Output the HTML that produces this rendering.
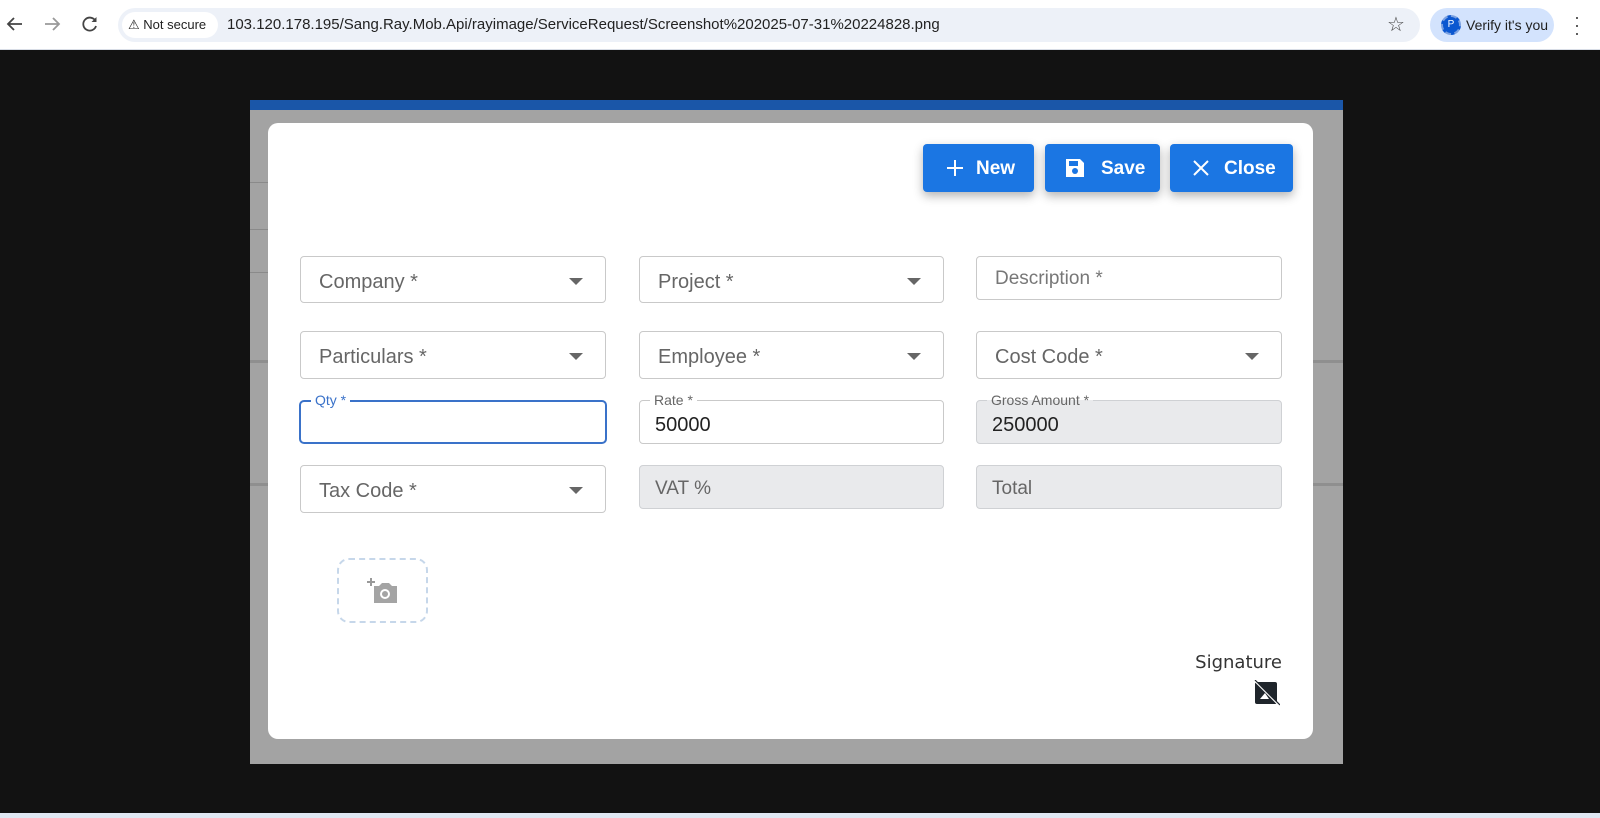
<!DOCTYPE html>
<html><head><meta charset="utf-8"><style>
*{box-sizing:border-box;margin:0;padding:0}
body{width:1600px;height:818px;overflow:hidden;background:#121212;font-family:"Liberation Sans",sans-serif;position:relative}
.abs{position:absolute}
.bar{left:0;top:0;width:1600px;height:50px;background:#fff;border-bottom:1px solid #d8dde6}
.url{left:118px;top:8px;width:1302px;height:34px;border-radius:17px;background:#edf1f8}
.ns{left:122px;top:12px;height:26px;width:96px;border-radius:13px;background:#fff;font-size:13px;line-height:26px;padding-left:6px;color:#222}
.urltext{left:227px;top:16px;font-size:15px;color:#222}
.verify{left:1430px;top:8px;width:124px;height:34px;border-radius:17px;background:#d3e3fd;font-size:14px;line-height:34px;padding-left:36px;color:#1f1f1f}
.overlay{left:250px;top:100px;width:1093px;height:664px;background:#a3a3a3}
.blue{left:250px;top:100px;width:1093px;height:10px;background:#1a56a8}
.modal{left:268px;top:123px;width:1045px;height:616px;background:#fff;border-radius:10px}
.btn{top:144px;height:48px;background:#1b76e3;border-radius:4px;color:#fff;font-weight:bold;font-size:19px;line-height:50px;box-shadow:0 4px 10px rgba(0,0,0,.3)}
.btn svg{position:absolute;top:13px}
.btn span{position:absolute;top:0}
.f{border:1px solid #c9c9c9;border-radius:4px;background:#fff;font-size:20px;color:#666;padding-left:18px}
.f.dis{background:#e9eaec;border-color:#cfd1d4}
.arrow{position:absolute;right:22px;top:50%;margin-top:-2px;width:0;height:0;border-left:7px solid transparent;border-right:7px solid transparent;border-top:7px solid #666}
.lbl{position:absolute;top:-9px;left:10px;background:#fff;padding:0 4px;font-size:14px;line-height:16px;color:#666}
</style></head><body>
<div class="abs bar"></div>
<svg class="abs" style="left:6px;top:15px" width="18" height="18" viewBox="0 0 18 18"><path d="M16 9H3M8 3L2 9l6 6" stroke="#444" stroke-width="1.8" fill="none"/></svg>
<svg class="abs" style="left:43px;top:15px" width="18" height="18" viewBox="0 0 18 18"><path d="M2 9h13M10 3l6 6-6 6" stroke="#999" stroke-width="1.8" fill="none"/></svg>
<svg class="abs" style="left:81px;top:15px" width="18" height="18" viewBox="0 0 18 18"><path d="M14.5 6A6.5 6.5 0 1 0 15 11" stroke="#444" stroke-width="1.8" fill="none"/><path d="M15.5 2v5h-5z" fill="#444"/></svg>
<div class="abs url"></div>
<div class="abs ns">⚠ Not secure</div>
<div class="abs urltext">103.120.178.195/Sang.Ray.Mob.Api/rayimage/ServiceRequest/Screenshot%202025-07-31%20224828.png</div>
<div class="abs" style="left:1387px;top:12px;font-size:20px;color:#444">☆</div>
<div class="abs verify">Verify it's you</div>
<div class="abs" style="left:1441px;top:15px;width:20px;height:20px;border-radius:50%;background:#0b57d0;border:2px dashed #7aa0e0;color:#fff;font-size:10px;text-align:center;line-height:16px">P</div>
<div class="abs" style="left:1574px;top:13px;font-size:18px;color:#444;line-height:8px">·<br>·<br>·</div>

<div class="abs overlay"></div>
<div class="abs" style="left:250px;top:182px;width:20px;height:1px;background:#8a8a8a"></div>
<div class="abs" style="left:250px;top:229px;width:20px;height:1px;background:#8a8a8a"></div>
<div class="abs" style="left:250px;top:272px;width:20px;height:1px;background:#8a8a8a"></div>
<div class="abs" style="left:250px;top:360px;width:1093px;height:3px;background:#8f8f8f"></div>
<div class="abs" style="left:250px;top:483px;width:1093px;height:3px;background:#8f8f8f"></div>
<div class="abs blue"></div>
<div class="abs modal"></div>

<div class="abs btn" style="left:923px;width:111px"><svg style="left:21px" width="22" height="22" viewBox="0 0 22 22"><path d="M11 3v16M3 11h16" stroke="#fff" stroke-width="2"/></svg><span style="left:53px">New</span></div>
<div class="abs btn" style="left:1045px;width:115px"><svg style="left:19px" width="22" height="22" viewBox="0 0 22 22"><path d="M2 2h14l4 4v14H2z" fill="#fff"/><rect x="5" y="4" width="9" height="5" fill="#1b76e3"/><circle cx="11" cy="14" r="3" fill="#1b76e3"/></svg><span style="left:56px">Save</span></div>
<div class="abs btn" style="left:1170px;width:123px"><svg style="left:20px" width="22" height="22" viewBox="0 0 22 22"><path d="M4 4l14 14M18 4L4 18" stroke="#fff" stroke-width="2"/></svg><span style="left:54px">Close</span></div>

<div class="abs f" style="left:300px;top:256px;width:306px;height:47px;line-height:50px">Company *<div class="arrow"></div></div>
<div class="abs f" style="left:639px;top:256px;width:305px;height:47px;line-height:50px">Project *<div class="arrow"></div></div>
<div class="abs f" style="left:976px;top:256px;width:306px;height:44px;line-height:43px;font-size:19px;color:#777">Description *</div>

<div class="abs f" style="left:300px;top:331px;width:306px;height:48px;line-height:51px">Particulars *<div class="arrow"></div></div>
<div class="abs f" style="left:639px;top:331px;width:305px;height:48px;line-height:51px">Employee *<div class="arrow"></div></div>
<div class="abs f" style="left:976px;top:331px;width:306px;height:48px;line-height:51px">Cost Code *<div class="arrow"></div></div>

<div class="abs f" style="left:299px;top:400px;width:308px;height:44px;border:2px solid #3a72c9;border-radius:5px"><div class="lbl" style="color:#3a72c9;top:-10px">Qty *</div></div>
<div class="abs f" style="left:639px;top:400px;width:305px;height:44px;color:#222;padding-left:15px;line-height:48px">50000<div class="lbl">Rate *</div></div>
<div class="abs f dis" style="left:976px;top:400px;width:306px;height:44px;color:#222;padding-left:15px;line-height:48px">250000<div class="lbl" style="background:linear-gradient(#fff 50%,#e9eaec 50%)">Gross Amount *</div></div>

<div class="abs f" style="left:300px;top:465px;width:306px;height:48px;line-height:51px">Tax Code *<div class="arrow"></div></div>
<div class="abs f dis" style="left:639px;top:465px;width:305px;height:44px;line-height:45px;font-size:19px;padding-left:15px">VAT %</div>
<div class="abs f dis" style="left:976px;top:465px;width:306px;height:44px;line-height:45px;font-size:19px;padding-left:15px">Total</div>

<div class="abs" style="left:337px;top:558px;width:91px;height:65px;border:2px dashed #c6d7ea;border-radius:12px"></div>
<svg class="abs" style="left:367px;top:577px" width="34" height="28" viewBox="0 0 34 28"><path d="M4 1v8M0 5h8" stroke="#999" stroke-width="2"/><path d="M7 9h5l3-3h7l3 3h5v17H7z" fill="#a4a4a4"/><circle cx="18" cy="17" r="5" fill="#fff"/><circle cx="18" cy="17" r="3" fill="#a4a4a4"/></svg>

<div class="abs" style="left:1160px;top:652px;width:122px;text-align:right;font-family:'DejaVu Sans',sans-serif;font-size:18px;color:#333">Signature</div>
<svg class="abs" style="left:1254px;top:680px" width="26" height="26" viewBox="0 0 26 26"><rect x="1" y="2" width="22" height="22" rx="2" fill="#1f252b"/><path d="M6 19l5-6 4 6z" fill="#fff"/><path d="M0 0L25 25" stroke="#fff" stroke-width="2"/><path d="M1 0L26 25" stroke="#1f252b" stroke-width="1.2"/></svg>

<div class="abs" style="left:0;top:813px;width:1600px;height:5px;background:#dfe7f3"></div>
</body></html>
